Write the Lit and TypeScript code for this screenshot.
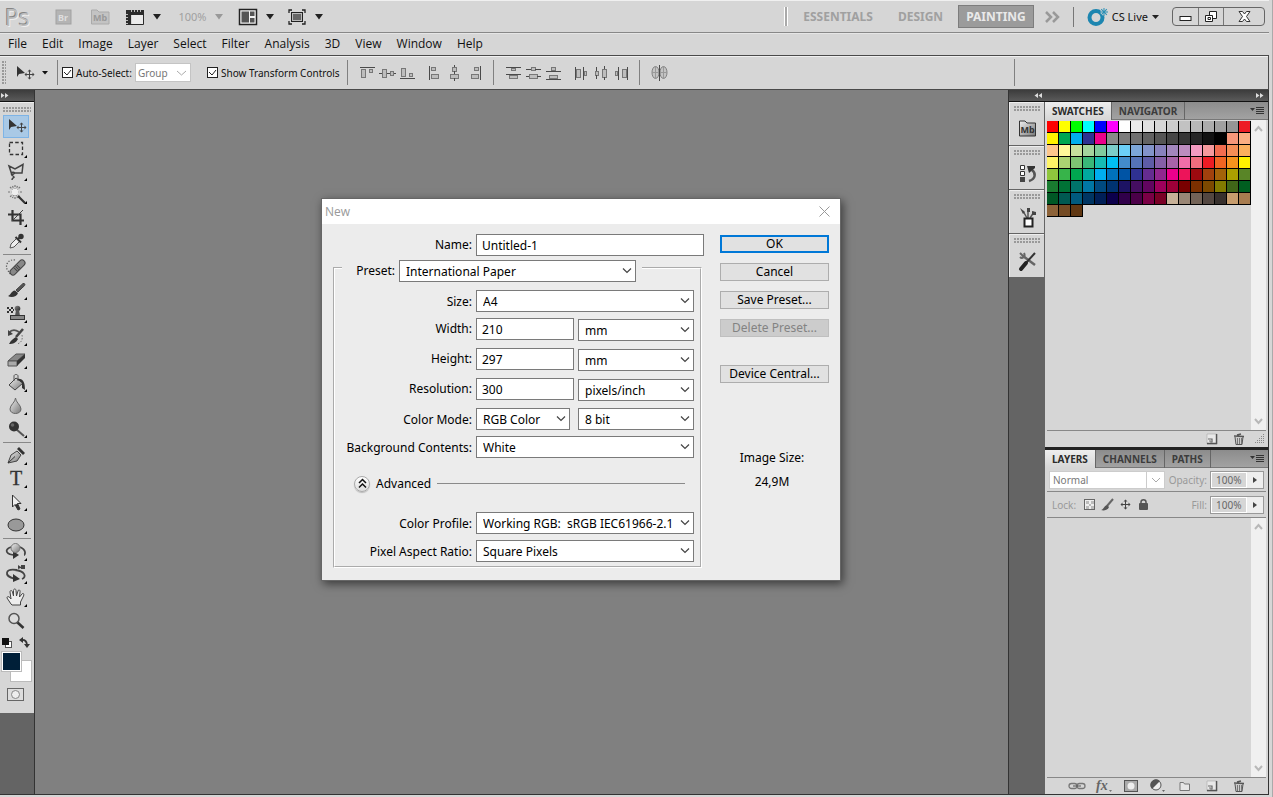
import { LitElement, html, svg, css, nothing, type TemplateResult } from "lit";
import { customElement, property } from "lit/decorators.js";

const icon = (w: number, h: number, body: unknown) =>
  html`<svg width=${w} height=${h} viewBox="0 0 ${w} ${h}" fill="none" aria-hidden="true">${body}</svg>`;

const defs = svg`<defs>
  <linearGradient id="metal" x1="0" y1="0" x2="1" y2="1"><stop offset="0" stop-color="#f0f0f0"/><stop offset="1" stop-color="#777"/></linearGradient>
  <linearGradient id="dark" x1="0" y1="0" x2="1" y2="1"><stop offset="0" stop-color="#888"/><stop offset="1" stop-color="#222"/></linearGradient>
</defs>`;

const cross = (x: number, y: number) => svg`
  <path d="M${x - 4} ${y}H${x + 4}M${x} ${y - 4}V${y + 4}" stroke="#444"/>
  <path d="M${x - 5} ${y}l2-2v4zM${x + 5} ${y}l-2-2v4zM${x} ${y - 5}l-2 2h4zM${x} ${y + 5}l-2-2h4z" fill="#444"/>`;

const caret = (color = "#222") => icon(8, 6, svg`<path d="M0 0H8L4 5.500z" fill=${color}/>`);
const smallCaret = icon(6, 4, svg`<path d="M0 0H6L3 3.500z" fill="#111"/>`);

const TOOLS: { name: string; art: TemplateResult | unknown; more?: boolean }[][] = [
  [
    { name: "Move", art: svg`<path d="M6 4V15L8 12L14 11z" fill="#333"/>${cross(18.5, 12.5)}` },
    { name: "Marquee", more: true, art: svg`<rect x="6.500" y="4.500" width="13" height="12" stroke="#333" stroke-width="1.300" stroke-dasharray="3.500 2.200"/>` },
    { name: "Lasso", more: true, art: svg`<path d="M6 5L12 8L20 3.500L19 12L12 12L9 14zM12 12C9 10 7 13 10 15C13 17 9 16 9 19" stroke="#444" stroke-width="1.500"/>` },
    { name: "Magic Wand", more: true, art: svg`<path d="M12 1V15M5 8H19M7 3L17 13M17 3L7 13M9.500 2L14.500 14M14.500 2L9.500 14" stroke="#777" stroke-width="1.200" stroke-dasharray="2 1"/><circle cx="12" cy="8" r="3.500" fill="#eee"/><path d="M15 12L22 19" stroke="#333" stroke-width="2.200"/>` },
    { name: "Crop", more: true, art: svg`<path d="M9.500 3V13.500H21M5 7.500H17.500V18" stroke="#333" stroke-width="2.200"/><path d="M20 3L9 14" stroke="#444"/>` },
    { name: "Eyedropper", more: true, art: svg`<path d="M7 18L8 14L14 8L17 11L11 17z" fill="#eee" stroke="#555"/><path d="M12.500 7L18 12.500M15 9L19 5.500" stroke="#333" stroke-width="2"/><circle cx="18" cy="6.500" r="2.700" fill="#333"/>` },
  ],
  [
    { name: "Healing Brush", more: true, art: svg`<path d="M12 3C6 2 2 7 4 12L7 17" stroke="#555" stroke-width="1.200" stroke-dasharray="1.200 1.600"/><path d="M10 15L19 6" stroke="#444" stroke-width="7" stroke-linecap="round"/><path d="M10 15L19 6" stroke="#888" stroke-width="5" stroke-linecap="round"/><path d="M12.500 13L16.500 9" stroke="#444" stroke-width="5" stroke-dasharray="1 1"/>` },
    { name: "Brush", more: true, art: svg`<path d="M13 10L20 3.500C23 3 22 6 20 7L15 12z" fill="#555" stroke="#444"/><path d="M5 16C8 15 8 11 12 10.500L15 13C14 17 8 18 5 16z" fill="#333"/>` },
    { name: "Clone Stamp", more: true, art: svg`<path d="M4 4h2v2h-2zM8 4h2v2h-2zM6 6h2v2h-2zM10 6h1v2h-1zM4 8h2v2h-2zM8 8h2v2h-2z" fill="#333"/><circle cx="14.500" cy="5.500" r="2.800" fill="url(#dark)"/><path d="M13 7H16L17 13H12z" fill="#555"/><rect x="7.500" y="12.500" width="14" height="4" fill="#888" stroke="#333"/>${defs}` },
    { name: "History Brush", more: true, art: svg`<path d="M6 7C9 3 13 4 16 6" stroke="#555" stroke-width="1.800"/><path d="M5 4V10L10 8z" fill="#444"/><path d="M6 18C8 14 11 12 13 11L15 13C13 17 10 18 6 18z" fill="#333"/><path d="M13 11L20 3" stroke="#444" stroke-width="2.500"/><path d="M19 9C20 14 18 17 14 18" stroke="#777" stroke-dasharray="1.500 1.500"/>` },
    { name: "Eraser", more: true, art: svg`<path d="M5 12L13 5H22L14 12z" fill="#888" stroke="#555"/><path d="M5 12H14V17H5z" fill="#aaa" stroke="#555"/><path d="M14 12L22 5V9L14 17z" fill="#333"/>` },
    { name: "Paint Bucket", more: true, art: svg`${defs}<path d="M6 13L13 6L20 11L12 18z" fill="url(#metal)" stroke="#444"/><path d="M11 9V4C11 2 15 2 15 4V9" stroke="#555"/><path d="M14 7C20 6 22 10 22 18L19 16V11z" fill="#333"/>` },
    { name: "Blur", more: true, art: svg`${defs}<path d="M12.500 3C12.500 7 7 10 7 14C7 20 18 20 18 14C18 10 12.500 7 12.500 3z" fill="url(#metal)" stroke="#666"/>` },
    { name: "Burn", more: true, art: svg`<path d="M13 11L21 18" stroke="#555" stroke-width="2"/><circle cx="11" cy="8.500" r="5" fill="#333"/><circle cx="9.500" cy="7" r="1.800" fill="#666"/>` },
  ],
  [
    { name: "Pen", more: true, art: svg`${defs}<path d="M5 18L8 10L14 6L18 10L14 16z" fill="url(#metal)" stroke="#444"/><path d="M5 18L12 11.500" stroke="#333"/><path d="M14 4L16 2L22 8L20 10z" fill="#333"/>` },
    { name: "Type", more: true, art: svg`<text x="7" y="17" font-family="Liberation Serif, serif" font-size="20" fill="#333" stroke="#333" stroke-width=".3">T</text>` },
    { name: "Path Selection", more: true, art: svg`<path d="M9.500 4V16L12 13.500L15 19L17 18L14.500 12.500H18z" fill="#eee" stroke="#333"/><path d="M12 14L15 19L17 18L14.500 12.500z" fill="#333"/>` },
    { name: "Ellipse", more: true, art: svg`<ellipse cx="13" cy="11" rx="8" ry="6" fill="#999" stroke="#333"/>` },
  ],
  [
    { name: "3D Rotate", more: true, art: svg`${defs}<path d="M8 6C0 9 4 14 12 14M17 6C24 9 22 14 21 14" stroke="#444" stroke-width="1.800"/><path d="M10 10L16 14L10 18z" fill="#333"/><circle cx="12.500" cy="7" r="4.500" fill="url(#metal)" stroke="#777"/>` },
    { name: "3D Camera", more: true, art: svg`<path d="M14 6C2 4 0 12 12 15M12 6C22 7 24 13 19 15" stroke="#444" stroke-width="1.800"/><path d="M10 10L17 15L10 18z" fill="#333"/><path d="M15 1L18 3V1H22V5H18V4L15 5z" fill="#444"/>` },
    { name: "Hand", more: true, art: svg`<path d="M8 17L4 11C4 9 6 9 8 12L7 5C7 3 9 3 9.500 5L10.500 9L10.500 3.500C10.500 1.500 13 1.500 13 3.500L13.500 9L15 4C15.500 2 17.500 3 17 5L16.500 10L19 7C20 5.500 21.500 7 20.500 9L17.500 15V18H9z" fill="#eee" stroke="#444"/>` },
    { name: "Zoom", art: svg`<path d="M14 12L20.500 18" stroke="#333" stroke-width="2.600"/><circle cx="11" cy="8.500" r="5" fill="#ddd" stroke="#555" stroke-width="1.500"/>` },
  ],
];

const SWATCHES = `ff0000 ffff00 00ff00 00ffff 0000ff ff00ff ffffff ebebeb e1e1e1 d7d7d7 cccccc c2c2c2 b7b7b7 acacac a0a0a0 959595 ed1c24
fff200 00a651 00aeef 2e3192 ec008c 898989 7d7d7d 707070 626262 555555 464646 363636 262626 111111 000000 f7977a fbad82
fdc68c fff799 c6df9c a4d49d 81ca9d 7bcdc9 6ccff7 7ca6d8 8293ca 8881be a286bd bc8cbf f49bc1 f5999d f26c4f f68e56 fbaf5d
fff467 acd372 7dc473 39b778 16bcb4 00bff3 438ccb 5573b7 5e5ca7 855fa8 a763a8 ef6ea8 f16d7e ee1c24 f16522 f7941d fff100
8fc63d 37b44a 00a650 00a99e 00aeef 0072bc 0054a5 2f3192 652c91 91278f ec008c ed145a 9d0a0f a1410d a36209 aba000 598527
197b30 007236 00736a 0076a4 004a80 003370 1d1363 450e61 62055f 9e005c 9d0039 790000 7b3000 7c4900 827a00 406618 005e20
005825 005951 005a7e 003562 001f57 0c004b 30004a 4b0048 7a0045 7a0026 c7b198 998675 736357 534741 37302d c69c6d a77c50
8c6238 744b24 613813`.split(/\s+/);

const shared = css`
  * { box-sizing: border-box; }
  svg { display: block; flex: none; overflow: visible; }
  button, input, select { font: inherit; color: inherit; margin: 0; border-radius: 0; }
  button { padding: 0; border: 0; background: none; display: flex; align-items: center; justify-content: center; }
  .grip { background: radial-gradient(circle at 1px 1px, #999 1px, transparent 1px) 0 0 / 3px 3px; }
`;

@customElement("ps-app-bar")
export class PsAppBar extends LitElement {
  static styles = [shared, css`
    :host { display: flex; align-items: center; height: 33px; padding: 0 4px 0 5px; border-top: 1px solid #f0f0f0; border-bottom: 1px solid #888; color: #a0a0a0; font: 11px "Noto Sans", sans-serif; }
    .logo { width: 41px; color: #bdbdbd; font: 23px/28px "Open Sans", sans-serif; text-shadow: -1px -1px #858585, 1px 1px #eee; }
    .left { display: flex; align-items: center; }
    .slot { width: 36px; }
    .drop { display: flex; align-items: center; gap: 9px; width: 49px; }
    .film { width: 51px; }
    .zoom { gap: 8px; width: 63px; }
    .spaces { display: flex; align-items: center; margin-left: auto; font: bold 12px "Noto Sans", sans-serif; }
    .bars { width: 4px; height: 19px; border: solid #fff; border-width: 0 1px; background: #aaa; margin-right: 3px; }
    .space { height: 23px; padding: 0 11px; border: 1px solid transparent; margin-right: 1px; }
    .spaces .on { background: #9b9b9b; border-color: #7d7d7d; color: #e9e9e9; padding: 0 7px; margin: 0 11px 0 2px; }
    .live { display: flex; align-items: center; gap: 4px; margin-left: 14px; padding-left: 13px; border-left: 1px solid #777; height: 20px; color: #111; font: 11px "Noto Sans", sans-serif; }
    .win { display: grid; grid-template-columns: 25px 25px 41px; margin-left: 13px; height: 19px; border: 1px solid #666; border-radius: 4px; }
    .win button + button { border-left: 1px solid #777; }
  `];
  render() {
    const spark = [0, 45, 90, 135].map((a) => svg`<path d="M13 5H21" transform="rotate(${a} 17 5)" stroke="#2a8fb5"/>`);
    return html`
      <div class="left">
        <span class="logo">Ps</span>
        <button class="slot" aria-label="Bridge">${icon(18, 16, svg`<rect x="1" y="1" width="15" height="14" fill="#b4b4b4" stroke="#a2a2a2"/><text x="3" y="12" font-size="9" font-weight="bold" fill="#dedede">Br</text>`)}</button>
        <button class="slot" aria-label="Mini Bridge">${icon(19, 16, svg`<path d="M.5 15V1H6L8 3H18V15z" fill="#c3c3c3" stroke="#aaa"/><text x="2" y="12" font-size="9" font-weight="bold" fill="#999">Mb</text>`)}</button>
        <button class="drop film" aria-label="View extras">${icon(18, 16, svg`<path d="M6 6H17V15H6z" fill="#ececec"/><path d="M0 1H18V6H5V16H0z" fill="#2c2c2c"/><path d="M5.500 1V3M8.500 1V3M11.500 1V3M14.500 1V3M0 5.500H2M0 8.500H2M0 11.500H2M0 14.500H2" stroke="#bbb"/><path d="M5 15.500H17.500V6" stroke="#2c2c2c"/>`)}${caret()}</button>
        <button class="drop zoom" aria-label="Zoom level">100% ${caret("#999")}</button>
        <button class="drop" aria-label="Arrange documents">${icon(18, 16, svg`<rect x=".5" y=".5" width="17" height="15" fill="#f2f2f2" stroke="#222" stroke-width="1.500"/><path d="M2.500 2.500H10V13.500H2.500zM11 2.500H15.500V7H11zM11 9H15.500V13.500H11z" fill="#555"/>`)}${caret()}</button>
        <button class="drop" aria-label="Screen mode">${icon(18, 16, svg`<path d="M4 1H1V4M14 1H17V4M4 15H1V12M14 15H17V12" stroke="#222" stroke-width="1.300"/><rect x="3.500" y="3.500" width="11" height="9" fill="#666" stroke="#222"/><rect x="4.500" y="4.500" width="9" height="7" stroke="#bbb"/>`)}${caret()}</button>
      </div>
      <div class="spaces">
        <span class="bars"></span>
        <button class="space">ESSENTIALS</button>
        <button class="space">DESIGN</button>
        <button class="space on">PAINTING</button>
        <button aria-label="More workspaces">${icon(14, 12, svg`<path d="M1 1L6 6L1 11M8 1L13 6L8 11" stroke="#999" stroke-width="2.500"/>`)}</button>
      </div>
      <button class="live">${icon(21, 19, svg`<circle cx="9" cy="10.500" r="6.500" stroke="#1d86b0" stroke-width="4"/><circle cx="17" cy="5" r="3.500" fill="#d6d6d6"/>${spark}`)}<span>CS Live</span>${icon(7, 4, svg`<path d="M0 0H7L3.500 4z" fill="#222"/>`)}</button>
      <div class="win">
        <button aria-label="Minimize">${icon(13, 8, svg`<rect x="1" y="3.500" width="11" height="4" fill="#fff" stroke="#222"/>`)}</button>
        <button aria-label="Restore">${icon(13, 12, svg`<path d="M4.500 .5H11.500V7.500H4.500z" fill="#fff" stroke="#222"/><path d="M.5 4.500H7.500V10.500H.5z" fill="#fff" stroke="#222"/><path d="M3 6.500H5.500V8.500H3z" stroke="#222"/>`)}</button>
        <button aria-label="Close">${icon(13, 11, svg`<path d="M1 .5H4.500L6.500 3L8.500 .5H12L8.500 5.500L12 10.500H8.500L6.500 8L4.500 10.500H1L4.500 5.500z" fill="#fff" stroke="#333"/>`)}</button>
      </div>`;
  }
}

type Box = [number, number, number, number];
const glyph = (label: string, line: string, ...boxes: Box[]) => html`<button aria-label=${label}>${icon(17, 16, svg`
  ${boxes.map(([x, y, w, h]) => svg`<rect x=${x + 0.5} y=${y + 0.5} width=${w} height=${h} fill="#bdbdbd" stroke="#777"/>`)}
  <path d=${line} stroke="#4a4a4a"/>`)}</button>`;

@customElement("ps-options-bar")
export class PsOptionsBar extends LitElement {
  static styles = [shared, css`
    :host { display: flex; align-items: center; height: 35px; padding-left: 2px; border: solid #4a4a4a; border-width: 1px 1px 1px 0; box-shadow: inset 0 1px #f0f0f0; color: #111; font: 10px "Noto Sans", sans-serif; }
    .grip { width: 4px; height: 24px; margin-right: 9px; }
    .tool { gap: 7px; width: 42px; justify-content: flex-start; }
    .rule { width: 1px; height: 25px; background: #808080; }
    label { display: flex; align-items: center; gap: 3px; white-space: nowrap; flex: none; }
    input { appearance: none; flex: none; width: 11px; height: 11px; border: 1px solid #222; background: #fff url("data:image/svg+xml,%3Csvg xmlns='http://www.w3.org/2000/svg' width='9' height='9'%3E%3Cpath d='M1 4L4 7L8 2' fill='none' stroke='%23222'/%3E%3C/svg%3E"); }
    .auto { margin-left: 4px; width: 73px; }
    .show { width: 140px; }
    select { appearance: none; width: 56px; height: 19px; padding: 0 2px; margin-right: 16px; color: #777; border: 1px solid #c4c4c4; background: #fff url("data:image/svg+xml,%3Csvg xmlns='http://www.w3.org/2000/svg' width='9' height='6'%3E%3Cpath d='M0 1L4.500 5L9 1' fill='none' stroke='%23aaa'/%3E%3C/svg%3E") no-repeat right 4px center; }
    .set { display: flex; gap: 3px; padding: 0 11px; }
    .set + .set { padding: 0 9px 0 0; }
    .tail { flex: 1; }
    .rest { width: 254px; height: 27px; border-left: 1px solid #808080; }
  `];
  render() {
    return html`
      <span class="grip"></span>
      <button class="tool" aria-label="Move tool presets">${icon(20, 15, svg`<path d="M2 1V12L4 9L10 8z" fill="#333"/>${cross(14.5, 9.5)}`)}${smallCaret}</button>
      <span class="rule"></span>
      <label class="auto"><input type="checkbox" checked />Auto-Select:</label>
      <select aria-label="Auto-select target"><option>Group</option></select>
      <label class="show"><input type="checkbox" checked />Show Transform Controls</label>
      <span class="rule"></span>
      <div class="set">
        ${glyph("Align top edges", "M1 2.500H16", [2, 4, 4, 8], [10, 4, 3, 3])}
        ${glyph("Align vertical centers", "M0 8.500H3M8 8.500H11M15 8.500H17", [3, 4, 4, 8], [11, 6, 3, 4])}
        ${glyph("Align bottom edges", "M1 13.500H16", [2, 3, 4, 8], [10, 8, 3, 3])}
      </div>
      <div class="set">
        ${glyph("Align left edges", "M2.500 1V15", [4, 2, 4, 3], [4, 9, 7, 4])}
        ${glyph("Align horizontal centers", "M7.500 0V2M7.500 6V9M7.500 13V16", [5, 2, 4, 4], [3, 9, 8, 4])}
        ${glyph("Align right edges", "M13.500 1V15", [7, 2, 4, 3], [4, 9, 7, 4])}
      </div>
      <span class="rule"></span>
      <div class="set">
        ${glyph("Distribute top edges", "M1 2.500H16M1 9.500H16", [6, 3, 4, 2], [4, 10, 8, 3])}
        ${glyph("Distribute vertical centers", "M1 4.500H6M10 4.500H16M1 11.500H4M12 11.500H16", [6, 2, 4, 3], [4, 9, 8, 4])}
        ${glyph("Distribute bottom edges", "M1 6.500H16M1 14.500H16", [6, 2, 4, 3], [4, 10, 8, 3])}
      </div>
      <div class="set">
        ${glyph("Distribute left edges", "M2.500 2V15M10.500 2V15", [3, 4, 4, 8], [11, 6, 2, 4])}
        ${glyph("Distribute horizontal centers", "M3.500 2V6M3.500 10V14M11.500 1V4M11.500 12V15", [2, 6, 3, 4], [9, 4, 4, 8])}
        ${glyph("Distribute right edges", "M5.500 2V15M14.500 2V15", [2, 6, 2, 4], [9, 4, 4, 8])}
      </div>
      <span class="rule"></span>
      <div class="set"><button aria-label="Auto-align layers">${icon(17, 16, svg`
        <ellipse cx="4.500" cy="7.500" rx="3.500" ry="6" fill="#c4c4c4" stroke="#808080"/><ellipse cx="12.500" cy="7.500" rx="3.500" ry="6" fill="#c4c4c4" stroke="#808080"/>
        <path d="M1 7.500H8M9 7.500H16M4.500 2V13M12.500 2V13" stroke="#999"/><path d="M8.500 0V16" stroke="#4a4a4a"/>`)}</button></div>
      <span class="tail"></span><span class="rest"></span>`;
  }
}

@customElement("ps-toolbox")
export class PsToolbox extends LitElement {
  static styles = [shared, css`
    :host { display: flex; flex-direction: column; width: 35px; flex: none; background: #646464; border-right: 1px solid #333; }
    .head { height: 12px; padding: 3px 1px; background: linear-gradient(#3c3c3c, #5a5a5a); border-bottom: 1px solid #111; }
    .panel { background: #d6d6d6; padding: 4px 3px 12px; border-top: 1px solid #eee; }
    .grip { height: 5px; margin-bottom: 3px; }
    .group + .group { border-top: 1px solid #888; margin-top: 1px; padding-top: 2px; }
    .tool { width: 26px; height: 23px; }
    .on { background: #a9c9e6; box-shadow: inset 0 0 0 1px #7eb4e6; }
    .mini { display: flex; justify-content: space-between; margin: 4px 1px 3px -1px; }
    .colors { display: grid; height: 31px; margin: 0 -1px 0 -2px; }
    .fg, .bg { grid-area: 1 / 1; border: 1px solid #bbb; box-shadow: inset 0 0 0 1px #fff; }
    .fg { width: 21px; height: 21px; background: #001f38; z-index: 1; }
    .bg { width: 22px; height: 22px; background: #fff; align-self: end; justify-self: end; }
    .mask { margin: 6px auto 0 4px; }
  `];
  render() {
    return html`
      <div class="head">${icon(8, 5, svg`<path d="M0 0L3.500 2.500L0 5zM4 0L7.500 2.500L4 5z" fill="#ddd"/>`)}</div>
      <div class="panel">
        <div class="grip"></div>
        ${TOOLS.map((group, g) => html`<div class="group">${group.map((t, i) => html`
          <button class="tool ${g + i === 0 ? "on" : ""}" aria-label=${t.name}>${icon(26, 23, svg`${t.art}${t.more ? svg`<path d="M24 17V20H21z" fill="#000"/>` : nothing}`)}</button>`)}</div>`)}
        <div class="mini">
          <button aria-label="Default colors">${icon(10, 11, svg`<rect x="3.500" y="4.500" width="6" height="6" fill="#fff" stroke="#555"/><rect x="0" y="1" width="7" height="7" fill="#111"/>`)}</button>
          <button aria-label="Swap colors">${icon(11, 11, svg`<path d="M2 3C6 2 8 5 8 8" stroke="#333" stroke-width="1.800"/><path d="M0 3L4 0V6zM8 11L5 7H11z" fill="#333"/>`)}</button>
        </div>
        <div class="colors"><button class="fg" aria-label="Foreground color"></button><button class="bg" aria-label="Background color"></button></div>
        <button class="mask" aria-label="Quick mask">${icon(17, 13, svg`<rect x=".5" y=".5" width="16" height="12" fill="#ddd" stroke="#666"/><circle cx="8.500" cy="6.500" r="4" fill="#eee" stroke="#888"/>`)}</button>
      </div>`;
  }
}

const newIcon = icon(12, 12, svg`<path d="M1 1H11V11H1z" fill="#e8e8e8" stroke="#aaa" stroke-width=".6"/><path d="M10.500 1V10.500H1" stroke="#555" stroke-width="1.400"/><path d="M2 6H6V9.500" stroke="#666" stroke-width="1.200"/><path d="M3 8H5V10" stroke="#777"/>`);
const trashIcon = icon(12, 12, svg`<path d="M2 4L3 11.500H9L10 4" fill="#ccc" stroke="#555"/><path d="M1 3L11 3.500M4 2L8 1" stroke="#555" stroke-width="1.500"/><path d="M4.500 5V11M6.500 5V11M8.500 5V11" stroke="#777"/>`);

@customElement("ps-panel")
export class PsPanel extends LitElement {
  @property({ attribute: false }) tabs: string[] = [];
  static styles = [shared, css`
    :host { display: flex; flex-direction: column; background: #d6d6d6; }
    .tabs { display: flex; height: 18px; flex: none; background: linear-gradient(#8c8c8c, #a2a2a2); border-bottom: 1px solid #777; }
    .tab { height: 18px; padding: 0 7px; border-right: 1px solid #666; color: #3c3c3c; font: bold 10px "Noto Sans", sans-serif; }
    .on { background: linear-gradient(#eee, #d6d6d6); color: #2c2c2c; }
    .menu { margin: 0 4px 0 auto; }
    .foot { display: flex; align-items: center; justify-content: flex-end; height: 17px; flex: none; margin: 0 2px; border-top: 1px solid #888; }
    .view { display: flex; flex: 1; min-height: 0; margin: 0 2px; }
    .free { flex: 1; min-width: 0; }
    .bar { display: flex; flex-direction: column; justify-content: space-between; align-items: center; width: 15px; padding: 6px 0; background: #f0f0f0; }
  `];
  render() {
    const chev = (d: string) => icon(9, 6, svg`<path d=${d} stroke="#b8b8b8" stroke-width="2"/>`);
    return html`
      <div class="tabs">
        ${this.tabs.map((t, i) => html`<button class="tab ${i ? "" : "on"}">${t}</button>`)}
        <button class="menu" aria-label="Panel menu">${icon(14, 9, svg`<path d="M0 2H5L2.500 5z" fill="#333"/><path d="M6 1.500H14M6 3.500H14M6 5.500H14M6 7.500H14" stroke="#333"/>`)}</button>
      </div>
      <slot name="controls"></slot>
      <div class="view">
        <div class="free"><slot></slot></div>
        <div class="bar">${chev("M1 5L4.500 1L8 5")}${chev("M1 1L4.500 5L8 1")}</div>
      </div>
      <div class="foot"><slot name="foot"></slot></div>`;
  }
}

@customElement("ps-dock")
export class PsDock extends LitElement {
  static styles = [shared, css`
    :host { display: flex; flex-direction: column; width: 261px; flex: none; background: #646464; border: solid #333; border-width: 0 1px; color: #999; font: 10px "Noto Sans", sans-serif; }
    .head { display: flex; align-items: center; height: 12px; flex: none; padding: 0 4px 0 25px; justify-content: space-between; background: linear-gradient(#3c3c3c, #5a5a5a); border-bottom: 1px solid #111; }
    .body { display: flex; flex: 1; min-height: 0; }
    .strip { display: flex; flex-direction: column; gap: 1px; width: 36px; padding-right: 1px; }
    .item { display: flex; flex-direction: column; align-items: center; gap: 7px; height: 43px; padding-top: 3px; background: #d6d6d6; border: solid #eee; border-width: 1px 0 0 1px; }
    .grip { width: 27px; height: 5px; }
    .panels { display: flex; flex-direction: column; gap: 3px; flex: 1; min-width: 0; background: #222; }
    .top { height: 345px; }
    .bottom { flex: 1; min-height: 0; }
    .swatches { display: grid; grid-template-columns: repeat(17, 12px); padding-top: 1px; }
    .swatch { height: 12px; border: solid #000; border-width: 0 1px 1px 0; }
    .row { display: flex; align-items: center; height: 23px; margin: 0 2px; padding: 0 2px; }
    .row + .row { height: 27px; border: solid #888; border-width: 1px 0; padding-left: 5px; }
    .mode { appearance: none; width: 116px; height: 18px; padding: 0 3px; color: #777; border: 1px solid #ccc; background: #fff url("data:image/svg+xml,%3Csvg xmlns='http://www.w3.org/2000/svg' width='18' height='16'%3E%3Cpath d='M0.500 0V16' stroke='%23ccc'/%3E%3Cpath d='M6 6L10 10L14 6' fill='none' stroke='%23aaa'/%3E%3C/svg%3E") no-repeat right center; }
    .locks { display: flex; gap: 5px; margin-left: 7px; }
    .field { display: flex; align-items: center; gap: 3px; margin-left: auto; }
    .num { display: flex; width: 54px; height: 18px; border: 1px solid #999; background: #eee; }
    .num input { width: 36px; border: 1px solid #fff; background: #d6d6d6; color: #666; padding: 0 4px; }
    .num button { flex: 1; }
    .tools { display: grid; grid-auto-flow: column; grid-auto-columns: 27px; align-items: center; justify-items: center; }
    .layers { padding: 0 14px 1px 0; }
    .foot { display: flex; align-items: center; }
    .size { width: 14px; display: flex; justify-content: center; }
  `];
  private number(label: string) {
    return html`<label class="field">${label}<span class="num"><input value="100%" /><button aria-label="${label} slider">${icon(4, 6, svg`<path d="M0 0L4 3L0 6z" fill="#444"/>`)}</button></span></label>`;
  }
  render() {
    const strip: [string, unknown][] = [
      ["Mini Bridge", svg`<path d="M2.500 18V3H8L10 5H18.500V18z" fill="url(#metal)" stroke="#333"/><text x="3.500" y="15" font-size="9" font-weight="bold" fill="#333">Mb</text>${defs}`],
      ["History", svg`<path d="M3.500 3.500H7.500V7.500H3.500zM3.500 9.500H7.500V13.500H3.500z" fill="#fff" stroke="#333"/><rect x="3" y="15" width="5" height="5" fill="#444"/><path d="M12 19C19 17 19 11 15 8" stroke="#555" stroke-width="2.500"/><path d="M10 4H18V6L12 11z" fill="#333"/>`],
      ["Brushes", svg`<path d="M10 12L6 5M11 12V4M13 12L17 6" stroke="#555" stroke-width="1.500"/><path d="M3 2L8 6L6 8zM10 2H13V6H10zM15 5L19 6V9H15z" fill="#444"/><path d="M7.500 12.500H15.500V20.500H7.500z" fill="#fff" stroke="#222" stroke-width="2"/>`],
      ["Tool Presets", svg`<path d="M6 6L18 15" stroke="#666" stroke-width="2.500"/><path d="M3 3L7 7M3 7C5 9 9 7 7 3" stroke="#666" stroke-width="2"/><path d="M18 3L8 14" stroke="#333" stroke-width="2"/><path d="M9 13L4 19" stroke="#222" stroke-width="4" stroke-linecap="round"/>`],
    ];
    return html`
      <div class="head">
        ${icon(8, 5, svg`<path d="M4 0L.5 2.500L4 5zM8 0L4.500 2.500L8 5z" fill="#ddd"/>`)}
        ${icon(8, 5, svg`<path d="M0 0L3.500 2.500L0 5zM4 0L7.500 2.500L4 5z" fill="#ddd"/>`)}
      </div>
      <div class="body">
        <div class="strip">${strip.map(([name, art]) => html`<div class="item"><span class="grip"></span><button aria-label=${name}>${icon(21, 22, art)}</button></div>`)}</div>
        <div class="panels">
          <ps-panel class="top" .tabs=${["SWATCHES", "NAVIGATOR"]}>
            <div class="swatches">${SWATCHES.map((c) => html`<button class="swatch" aria-label="#${c}" style="background:#${c}"></button>`)}</div>
            <div slot="foot" class="foot">
              <div class="tools"><button aria-label="New swatch">${newIcon}</button><button aria-label="Delete swatch">${trashIcon}</button></div>
              <span class="size">${icon(10, 10, svg`<path d="M9.500 0V10M7.500 2V10M5.500 4V10M3.500 6V10M1.500 8V10" stroke="#888" stroke-dasharray="1 1"/>`)}</span>
            </div>
          </ps-panel>
          <ps-panel class="bottom" .tabs=${["LAYERS", "CHANNELS", "PATHS"]}>
            <div slot="controls">
              <div class="row"><select class="mode" aria-label="Blend mode"><option>Normal</option></select>${this.number("Opacity:")}</div>
              <div class="row">Lock:
                <div class="locks">
                  <button aria-label="Lock transparency">${icon(13, 13, svg`<rect x="1.500" y="1.500" width="10" height="10" fill="#eee" stroke="#666"/><path d="M3 3h3v3h-3zM8 3h3v3h-3zM6 6h2v2h-2zM3 8h3v3h-3zM8 8h3v3h-3z" fill="#bbb"/>`)}</button>
                  <button aria-label="Lock pixels">${icon(13, 13, svg`<path d="M6 8L12 1" stroke="#666" stroke-width="2"/><path d="M0 12C3 11 3 8 6 7L8 9C7 12 3 13 0 12z" fill="#555"/>`)}</button>
                  <button aria-label="Lock position">${icon(13, 13, cross(6.5, 6.5))}</button>
                  <button aria-label="Lock all">${icon(13, 13, svg`<path d="M4 6V4C4 1 9 1 9 4V6" stroke="#555" stroke-width="1.500"/><rect x="2" y="5" width="9" height="7" rx="1" fill="#555"/>`)}</button>
                </div>
                ${this.number("Fill:")}
              </div>
            </div>
            <div slot="foot" class="tools layers">
              <button aria-label="Link layers">${icon(18, 12, svg`<rect x="1" y="3.500" width="8" height="5" rx="2.500" stroke="#777" stroke-width="1.300"/><rect x="9" y="3.500" width="8" height="5" rx="2.500" stroke="#777" stroke-width="1.300"/><path d="M5 6H13" stroke="#555"/>`)}</button>
              <button aria-label="Layer style">${icon(16, 14, svg`<text x="0" y="11" font-family="Liberation Serif, serif" font-style="italic" font-weight="bold" font-size="14" fill="#666">fx</text><path d="M13 11H16L14.500 13z" fill="#777"/>`)}</button>
              <button aria-label="Add mask">${icon(14, 12, svg`<rect x=".5" y=".5" width="13" height="11" fill="#aaa" stroke="#555"/><circle cx="7" cy="6" r="3.500" fill="#eee"/>`)}</button>
              <button aria-label="Adjustment layer">${icon(15, 13, svg`<circle cx="6" cy="6" r="5" fill="#eee" stroke="#555"/><path d="M2 10A5.500 5.500 0 0 1 10 2z" fill="#555"/><path d="M12 11H15L13.500 13z" fill="#666"/>`)}</button>
              <button aria-label="New group">${icon(12, 12, svg`<path d="M1 10.500V2.500H4.500L5.500 4H10.500V10.500z" fill="#e6e6e6" stroke="#777"/>`)}</button>
              <button aria-label="New layer">${newIcon}</button>
              <button aria-label="Delete layer">${trashIcon}</button>
            </div>
          </ps-panel>
        </div>
      </div>`;
  }
}

@customElement("ps-new-dialog")
export class PsNewDialog extends LitElement {
  static styles = [shared, css`
    :host { display: block; width: 518px; background: #ececec; box-shadow: 0 0 0 1px #666, 2px 3px 9px 1px rgba(0, 0, 0, .55); color: #000; font: 12px/16px "Noto Sans", sans-serif; }
    header { display: flex; align-items: center; justify-content: space-between; height: 25px; padding: 0 10px 1px 3px; background: #fff; color: #999; font: 12px "Open Sans", sans-serif; }
    form { display: flex; gap: 16px; padding: 10px 11px 12px; }
    .main { width: 371px; }
    .row { display: flex; align-items: center; }
    .name { justify-content: flex-end; gap: 4px; height: 22px; margin-bottom: 4px; }
    input, select { height: 22px; border: 1px solid #7a7a7a; background: #fff; padding: 0 5px; min-width: 0; }
    .name input { width: 228px; }
    select { appearance: none; padding: 1px 6px 0; background: #fff url("data:image/svg+xml,%3Csvg xmlns='http://www.w3.org/2000/svg' width='10' height='6'%3E%3Cpath d='M1 0.500L5 4.500L9 0.500' fill='none' stroke='%23444' stroke-width='1.200'/%3E%3C/svg%3E") no-repeat right 3px center; }
    fieldset { width: 369px; margin: 0; padding: 14px 6px 4px 5px; border: 2px groove #fff; }
    legend { display: flex; align-items: flex-start; justify-content: flex-end; gap: 4px; width: 300px; height: 16px; margin-left: 2px; padding: 0 6px 0 0; }
    legend label { line-height: 22px; }
    legend select { width: 237px; }
    .grid { display: grid; grid-template-columns: 132px 98px 116px; column-gap: 4px; justify-content: end; }
    .grid label { text-align: right; line-height: 22px; white-space: nowrap; }
    .grid .low { line-height: 24px; }
    .basic { grid-template-rows: 28px 30px 30px 30px 28px 22px; }
    .extra { grid-template-rows: 28px 22px; }
    .wide { grid-column: span 2; }
    .unit { margin-top: 1px; }
    .mode { width: 94px; }
    .adv { display: flex; align-items: center; gap: 6px; height: 54px; padding: 0 9px 3px 14px; }
    .round { width: 16px; height: 16px; border: 1px solid #aaa; border-radius: 8px; background: linear-gradient(#fff, #ddd); box-shadow: 0 1px 1px #bbb; }
    .line { flex: 1; height: 1px; background: #8a8a8a; }
    .side { display: flex; flex-direction: column; width: 109px; padding-top: 1px; gap: 10px; text-align: center; }
    .side button { height: 18px; border: 1px solid #adadad; background: #e1e1e1; }
    .side .ok { border: 2px solid #0078d7; }
    .side button:disabled { background: #ccc; border-color: #bfbfbf; color: #838383; }
    .side .apart { margin-top: 18px; }
    .size { display: flex; flex-direction: column; gap: 8px; margin: 57px 5px 0 0; }
  `];
  private pair(id: string, label: string, value: string, unit: string) {
    return html`<label for=${id}>${label}</label><input id=${id} value=${value} /><select class="unit" aria-label="${label} unit"><option>${unit}</option></select>`;
  }
  private choice(id: string, label: string, value: string) {
    return html`<label class="low" for=${id}>${label}</label><select id=${id} class="wide"><option>${value}</option></select>`;
  }
  render() {
    return html`
      <header><span>New</span><button aria-label="Close">${icon(11, 11, svg`<path d="M.5 .5L10.500 10.500M10.500 .5L.5 10.500" stroke="#999"/>`)}</button></header>
      <form @submit=${(e: Event) => e.preventDefault()}>
        <div class="main">
          <div class="row name"><label for="name">Name:</label><input id="name" value="Untitled-1" /></div>
          <fieldset>
            <legend><label for="preset">Preset:</label><select id="preset"><option>International Paper</option></select></legend>
            <div class="grid basic">
              ${this.choice("size", "Size:", "A4")}
              ${this.pair("width", "Width:", "210", "mm")}
              ${this.pair("height", "Height:", "297", "mm")}
              ${this.pair("res", "Resolution:", "300", "pixels/inch")}
              <label class="low" for="mode">Color Mode:</label><select id="mode" class="mode"><option>RGB Color</option></select><select aria-label="Bit depth"><option>8 bit</option></select>
              ${this.choice("bg", "Background Contents:", "White")}
            </div>
            <div class="adv"><button type="button" class="round" aria-label="Hide advanced">${icon(9, 11, svg`<path d="M1 5L4.500 1.500L8 5M1 9.500L4.500 6L8 9.500" stroke="#111" stroke-width="1.500"/>`)}</button><span>Advanced</span><span class="line"></span></div>
            <div class="grid extra">
              ${this.choice("profile", "Color Profile:", "Working RGB:\u00a0 sRGB IEC61966-2.1")}
              ${this.choice("ratio", "Pixel Aspect Ratio:", "Square Pixels")}
            </div>
          </fieldset>
        </div>
        <div class="side">
          <button class="ok">OK</button>
          <button type="button">Cancel</button>
          <button type="button">Save Preset...</button>
          <button type="button" disabled>Delete Preset...</button>
          <button type="button" class="apart">Device Central...</button>
          <div class="size"><span>Image Size:</span><span>24,9M</span></div>
        </div>
      </form>`;
  }
}

@customElement("app-root")
export class AppRoot extends LitElement {
  static styles = [shared, css`
    :host { display: flex; flex-direction: column; height: 100vh; overflow: hidden; padding: 0 3px 2px 0; background: #d6d6d6; border-right: 1px solid #aaa; box-sizing: border-box; }
    nav { display: flex; gap: 15px; align-items: center; height: 22px; padding: 0 0 1px 8px; box-shadow: inset 0 1px #e6e6e6; font: 12px "Open Sans", sans-serif; }
    nav a { color: #111; text-decoration: none; }
    main { display: flex; flex: 1; min-height: 0; border-bottom: 1px solid #333; }
    .canvas { position: relative; flex: 1; min-width: 0; background: #808080; }
    .dialog { position: absolute; left: 287px; top: 109px; }
  `];
  render() {
    return html`
      <ps-app-bar></ps-app-bar>
      <nav>${["File", "Edit", "Image", "Layer", "Select", "Filter", "Analysis", "3D", "View", "Window", "Help"].map((m) => html`<a href="#">${m}</a>`)}</nav>
      <ps-options-bar></ps-options-bar>
      <main>
        <ps-toolbox></ps-toolbox>
        <div class="canvas"><ps-new-dialog class="dialog"></ps-new-dialog></div>
        <ps-dock></ps-dock>
      </main>`;
  }
}
